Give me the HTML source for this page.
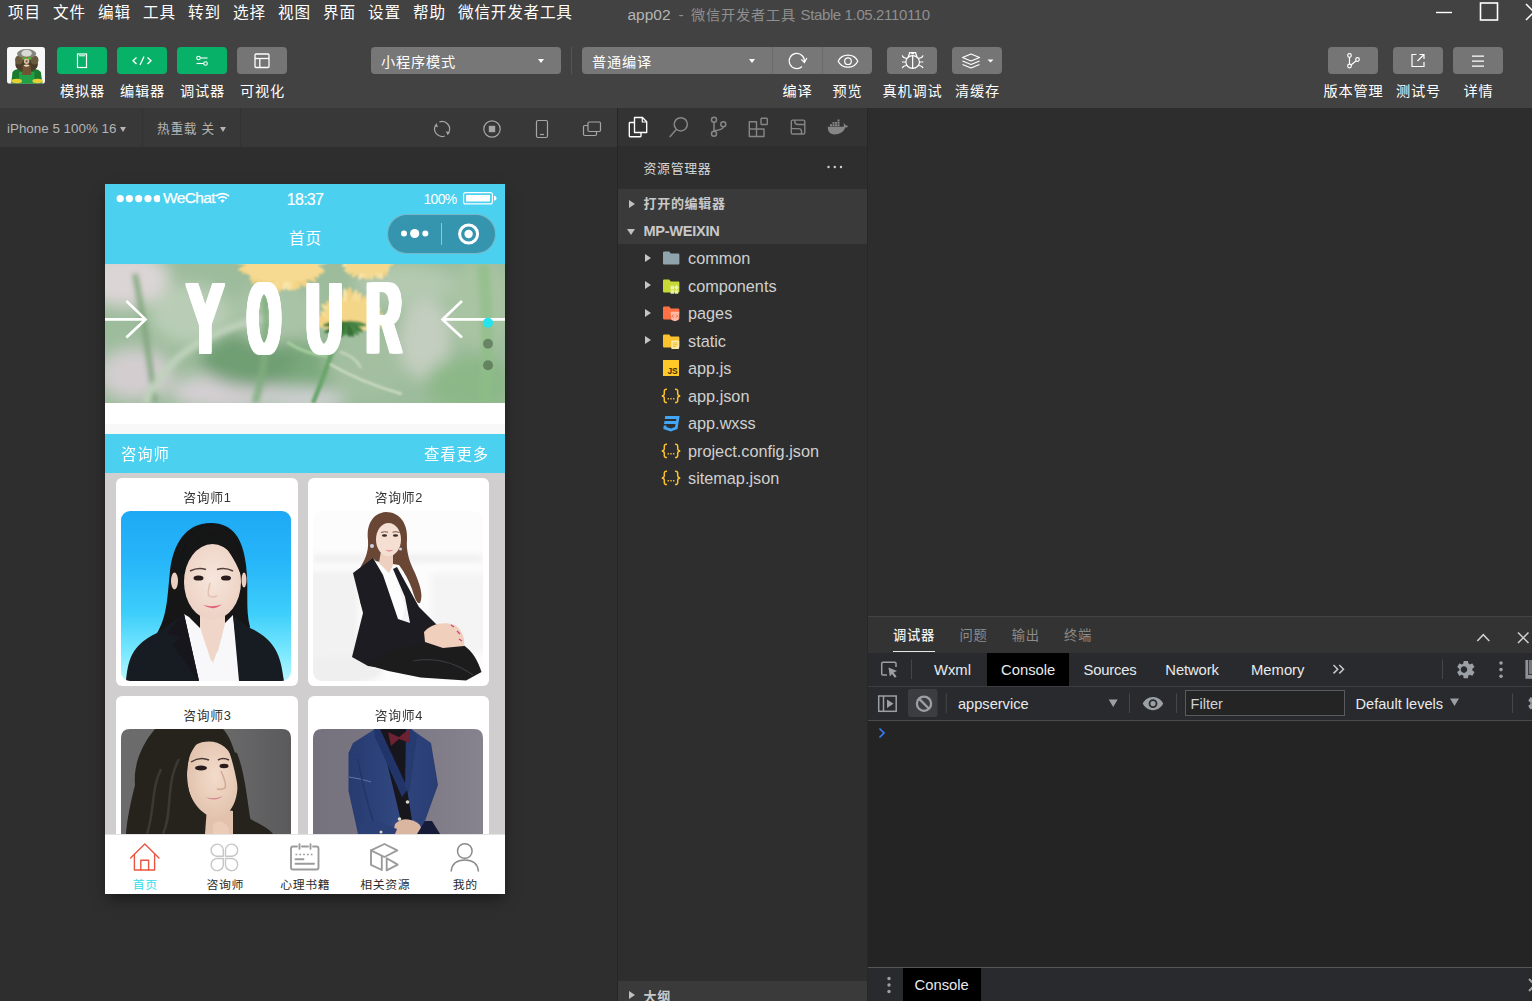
<!DOCTYPE html>
<html lang="zh-CN">
<head>
<meta charset="utf-8">
<title>app02 - 微信开发者工具 Stable 1.05.2110110</title>
<style>
*{box-sizing:border-box;margin:0;padding:0}
html,body{width:1532px;height:1001px;overflow:hidden;background:#424242}
body{font-family:"Liberation Sans","Noto Sans CJK SC",sans-serif;color:#fff;position:relative}
.abs{position:absolute}
svg{display:block;overflow:visible}
/* ---------- menu bar ---------- */
#menubar{left:0;top:0;width:1532px;height:28px;background:#424242}
.mi{position:absolute;top:0.900px;font-size:15.600px;letter-spacing:0.800px;line-height:24px;color:#fff;white-space:nowrap}
#title{position:absolute;left:627.500px;top:2.500px;font-size:15.500px;line-height:24px;color:#8f8f8f;white-space:nowrap}
#title b{font-weight:normal;color:#b5b5b5}
/* ---------- toolbar ---------- */
#toolbar{left:0;top:28px;width:1532px;height:80px;background:#424242}
.tbtn{position:absolute;top:47px;height:27px;width:50px;border-radius:4px;background:#757575}
.tbtn.g{background:#07b268}
.tlab{position:absolute;top:80.500px;height:20px;line-height:20px;font-size:14.200px;letter-spacing:0.800px;padding-left:0.800px;color:#fff;text-align:center;white-space:nowrap}
.dd{position:absolute;top:47px;height:27px;background:#777;border-radius:4px;font-size:14.200px;letter-spacing:0.800px;line-height:30.600px;color:#fff;padding-left:10px;overflow:hidden}
.caret{position:absolute;width:0;height:0;border-left:3.5px solid transparent;border-right:3.5px solid transparent;border-top:4.5px solid #fff}
/* ---------- simulator ---------- */
#simbar{left:0;top:108px;width:617px;height:39px;background:#383838}
#simarea{left:0;top:147px;width:617px;height:854px;background:#2e2e2e}
#vdiv{left:617px;top:108px;width:1px;height:893px;background:#262626}
.simtxt{position:absolute;top:119px;font-size:13.400px;line-height:20px;color:#b4b4b4;white-space:nowrap}

/* ---------- phone ---------- */
#phone{left:105px;top:184px;width:400px;height:710px;background:#d0cece;overflow:hidden;box-shadow:0 7px 14px -3px rgba(0,0,0,.5);font-family:"Liberation Sans","Noto Sans CJK SC",sans-serif}
#phone .nav{position:absolute;left:0;top:0;width:400px;height:80px;background:#4cd0f0}
#phone .st{position:absolute;top:5px;font-size:14px;line-height:18px;color:#fff;white-space:nowrap}
#phone .ttl{position:absolute;left:0;top:43.900px;width:400px;text-align:center;font-size:15.600px;letter-spacing:1px;padding-left:1px;line-height:22px;color:#fff}
#phone .cap{position:absolute;left:282.200px;top:30px;width:109px;height:39.500px;border-radius:20px;background:#3695ae;border:1px solid rgba(255,255,255,.32)}
#phone .hd{position:absolute;left:0;top:250px;width:400px;height:39px;background:#4cd0f0;color:#fff;font-size:15.400px;letter-spacing:0.850px;line-height:42px}
.card{position:absolute;width:182px;height:208px;background:#fff;border-radius:6px}
.card .ct{position:absolute;left:0;top:9.500px;width:100%;text-align:center;font-size:12.800px;letter-spacing:0.700px;padding-left:0.700px;line-height:20px;color:#333}
.card svg{position:absolute;left:5px;top:33px}
#tabbar{position:absolute;left:0;top:650px;width:400px;height:60px;background:#fff}
#tabbar .tl{position:absolute;top:42.400px;width:80px;text-align:center;font-size:11.900px;letter-spacing:0.600px;padding-left:0.600px;line-height:18px;color:#2c2c2c}
/* ---------- explorer ---------- */
#actbar{left:618px;top:108px;width:250px;height:38px;background:#333}
#explorer{left:618px;top:146px;width:250px;height:855px;background:#2e2e2e}
#editor{left:868px;top:108px;width:664px;height:509px;background:#2d2d2d}
.sec{position:absolute;left:618px;width:249px;height:27.5px;background:#3a3a3a;font-size:13px;letter-spacing:0.700px;font-weight:bold;color:#c8c8c8;line-height:27px}
.row{position:absolute;left:619px;width:248px;height:27.5px;font-size:16.250px;line-height:27px;color:#d0d0d0;white-space:nowrap}
.row span{position:absolute;left:69px;top:1px}
.tri{position:absolute;width:0;height:0;border-top:4.5px solid transparent;border-bottom:4.5px solid transparent;border-left:6px solid #c0c0c0}
.trid{position:absolute;width:0;height:0;border-left:4.5px solid transparent;border-right:4.5px solid transparent;border-top:6px solid #c0c0c0}
/* ---------- debugger ---------- */
#panel{left:868px;top:616px;width:664px;height:385px;background:#242424;border-top:1px solid #444}

.ptab{position:absolute;top:626px;font-size:13.300px;letter-spacing:0.700px;line-height:20px;color:#8b8b8b;white-space:nowrap}
.dtab{position:absolute;top:654px;height:33px;font-size:14.800px;line-height:33px;color:#e8eaed;white-space:nowrap}
.ctx{position:absolute;top:688px;height:33px;font-size:14.600px;line-height:33px;color:#e8eaed;white-space:nowrap}
</style>
</head>
<body>
<div id="menubar" class="abs"></div>
<div id="toolbar" class="abs"></div>
<div id="simbar" class="abs"></div>
<div id="simarea" class="abs"></div>
<div id="vdiv" class="abs"></div>
<div id="actbar" class="abs"></div>
<div id="explorer" class="abs"></div>
<div id="editor" class="abs"></div>
<div id="panel" class="abs"></div>
<div class="mi" style="left:8px">项目</div>
<div class="mi" style="left:53px">文件</div>
<div class="mi" style="left:98px">编辑</div>
<div class="mi" style="left:143px">工具</div>
<div class="mi" style="left:188px">转到</div>
<div class="mi" style="left:233px">选择</div>
<div class="mi" style="left:278px">视图</div>
<div class="mi" style="left:323px">界面</div>
<div class="mi" style="left:368px">设置</div>
<div class="mi" style="left:413px">帮助</div>
<div class="mi" style="left:458px">微信开发者工具</div>
<div id="title"><b style="position:absolute;left:0;top:0">app02</b><span style="position:absolute;left:51px;top:0">-</span><span style="position:absolute;left:63.500px;top:0;font-size:14.200px;letter-spacing:0.800px">微信开发者工具</span><span style="position:absolute;left:173px;top:0;font-size:15px;letter-spacing:-0.370px">Stable 1.05.2110110</span></div>
<svg class="abs" style="left:1430px;top:0" width="102" height="28" viewBox="0 0 102 28">
<line x1="6" y1="12.5" x2="22" y2="12.5" stroke="#fff" stroke-width="1.4"/>
<rect x="50.5" y="3" width="17" height="17" fill="none" stroke="#fff" stroke-width="1.6"/>
<path d="M96 4 L112 20 M112 4 L96 20" stroke="#fff" stroke-width="1.5" fill="none"/>
</svg>
<!--MENU-->

<!-- avatar -->
<svg class="abs" style="left:7px;top:46.600px" width="38" height="36.700" viewBox="0 0 38 36.700">
<defs><clipPath id="avc"><rect x="0" y="0" width="38" height="36.700" rx="2.800"/></clipPath><filter id="avb" x="-10%" y="-10%" width="120%" height="120%"><feGaussianBlur stdDeviation="0.550"/></filter></defs>
<g clip-path="url(#avc)"><rect x="0" y="0" width="38" height="36.700" fill="#f7f7f7"/>
<g filter="url(#avb)">
<path d="M4.200 36.700 L5.500 25 C8 22 13 21.300 19.600 21.300 C26 21.300 31 22 33.800 25 L35.500 36.700 Z" fill="#1b7a2e"/>
<path d="M12 25 H27.500 V36.700 H12 Z" fill="#21a046"/>
<ellipse cx="19.600" cy="17" rx="11.300" ry="8.300" fill="#4b3b29"/>
<ellipse cx="12" cy="13" rx="4" ry="4.500" fill="#6a5a3c"/><ellipse cx="27.500" cy="13" rx="4" ry="4.500" fill="#6a5a3c"/>
<path d="M16 18 H23.500 L24.500 28 H15 Z" fill="#6e5236"/>
<ellipse cx="19.600" cy="6.800" rx="9.600" ry="4.700" fill="#85857d"/>
<ellipse cx="19.600" cy="6.300" rx="5.200" ry="3.600" fill="#d9d9d5"/>
<rect x="14.500" y="9.700" width="10.400" height="3.300" rx="1.500" fill="#8a6a36"/>
<rect x="15.600" y="10.300" width="3" height="2" fill="#43c043"/><rect x="21" y="10.300" width="3" height="2" fill="#43c043"/>
<circle cx="19.600" cy="14.300" r="2.700" fill="#d8c4a2"/><circle cx="19.600" cy="14.300" r="1.100" fill="#6e5a40"/>
<ellipse cx="19.600" cy="18.600" rx="2.800" ry="1.100" fill="#eddcb9"/>
<ellipse cx="9.800" cy="34" rx="5.200" ry="2.200" fill="#e6d033"/><ellipse cx="30.600" cy="34" rx="5.200" ry="2.200" fill="#e6d033"/>
</g></g></svg>
<!-- left buttons -->
<div class="tbtn g" style="left:57px"><svg width="50" height="27" viewBox="0 0 50 27"><rect x="20.500" y="7" width="9" height="13.500" fill="none" stroke="#fff" stroke-width="1.200"/><line x1="22" y1="8.800" x2="28" y2="8.800" stroke="#fff" stroke-width="1"/></svg></div>
<div class="tbtn g" style="left:117px"><svg width="50" height="27" viewBox="0 0 50 27"><path d="M19.500 10.500 L16 13.700 L19.500 17 M30.500 10.500 L34 13.700 L30.500 17 M27 9.500 L23 18" fill="none" stroke="#fff" stroke-width="1.300"/></svg></div>
<div class="tbtn g" style="left:177px"><svg width="50" height="27" viewBox="0 0 50 27"><circle cx="21.500" cy="11" r="1.800" fill="none" stroke="#fff" stroke-width="1.100"/><line x1="23.500" y1="11" x2="30.500" y2="11" stroke="#fff" stroke-width="1.100"/><circle cx="28.500" cy="16.500" r="1.800" fill="none" stroke="#fff" stroke-width="1.100"/><line x1="19.500" y1="16.500" x2="26.500" y2="16.500" stroke="#fff" stroke-width="1.100"/></svg></div>
<div class="tbtn" style="left:237px"><svg width="50" height="27" viewBox="0 0 50 27"><rect x="18" y="7" width="14" height="13.500" rx="1" fill="none" stroke="#fff" stroke-width="1.300"/><line x1="18" y1="11.500" x2="32" y2="11.500" stroke="#fff" stroke-width="1.300"/><line x1="22.800" y1="11.500" x2="22.800" y2="20.500" stroke="#fff" stroke-width="1.300"/></svg></div>
<div class="tlab" style="left:52px;width:60px">模拟器</div>
<div class="tlab" style="left:112px;width:60px">编辑器</div>
<div class="tlab" style="left:172px;width:60px">调试器</div>
<div class="tlab" style="left:232px;width:60px">可视化</div>
<!-- center -->
<div class="dd" style="left:371px;width:190px">小程序模式<i class="caret" style="left:167px;top:11.500px"></i></div>
<div class="abs" style="left:571px;top:47px;width:1px;height:27px;background:#555"></div>
<div class="dd" style="left:582px;width:290px">普通编译<i class="caret" style="left:167px;top:11.500px"></i></div>
<div class="abs" style="left:772px;top:47px;width:1px;height:27px;background:#6a6a6a"></div>
<div class="abs" style="left:822px;top:47px;width:1px;height:27px;background:#6a6a6a"></div>
<svg class="abs" style="left:773px;top:47px" width="49" height="27" viewBox="0 0 49 27"><path d="M28.980 19.550 A7.600 7.600 0 1 1 31.300 15.300" fill="none" stroke="#fff" stroke-width="1.200"/><path d="M28.300 12.300 L31.400 15.500 L33.900 11" fill="none" stroke="#fff" stroke-width="1.200"/></svg>
<svg class="abs" style="left:823px;top:47px" width="49" height="27" viewBox="0 0 49 27"><path d="M15.200 14.200 C19 6.200 31 6.200 34.800 14.200 C31 22.200 19 22.200 15.200 14.200 Z" fill="none" stroke="#fff" stroke-width="1.200"/><circle cx="25" cy="14.200" r="3.300" fill="none" stroke="#fff" stroke-width="1.200"/></svg>
<div class="tbtn" style="left:887px"><svg width="50" height="27" viewBox="0 0 50 27" fill="none" stroke="#fff" stroke-width="1.200"><ellipse cx="25.650" cy="15" rx="6.800" ry="6.400"/><path d="M21.300 10 L22.700 5.700 H28.600 L30 10 M24.300 6.600 H27 M25.650 8.600 V21.400 M18.800 15 H15 M32.500 15 H36.300 M19.800 11.300 Q16 11 15.300 8.300 M31.500 11.300 Q35.300 11 36 8.300 M19.800 18.500 Q16.500 18.500 15.300 21 M31.500 18.500 Q34.800 18.500 36 21"/></svg></div>
<div class="tbtn" style="left:952px"><svg width="50" height="27" viewBox="0 0 50 27"><path d="M19 7 L27.500 10.500 L19 14 L10.500 10.500 Z M10.500 14 L19 17.500 L27.500 14 M10.500 17.500 L19 21 L27.500 17.500" fill="none" stroke="#fff" stroke-width="1.200" stroke-linejoin="round"/><path d="M35.500 12.500 h6 l-3 3z" fill="#fff"/></svg></div>
<div class="tlab" style="left:767px;width:60px">编译</div>
<div class="tlab" style="left:817px;width:60px">预览</div>
<div class="tlab" style="left:872px;width:80px">真机调试</div>
<div class="tlab" style="left:942px;width:70px">清缓存</div>
<!-- right -->
<div class="tbtn" style="left:1328px"><svg width="50" height="27" viewBox="0 0 50 27"><circle cx="21.500" cy="8.500" r="1.800" fill="none" stroke="#fff" stroke-width="1.200"/><circle cx="21.500" cy="19" r="1.800" fill="none" stroke="#fff" stroke-width="1.200"/><circle cx="29.500" cy="12.500" r="1.800" fill="none" stroke="#fff" stroke-width="1.200"/><path d="M21.500 10.300 V17.200 M23 18 L28.200 13.700" fill="none" stroke="#fff" stroke-width="1.200"/></svg></div>
<div class="tbtn" style="left:1393px"><svg width="50" height="27" viewBox="0 0 50 27"><path d="M23.500 7.500 H19 V19.500 H31 V15" fill="none" stroke="#fff" stroke-width="1.200"/><path d="M24.500 14 L31 7.500 M26.500 7.500 H31 V12" fill="none" stroke="#fff" stroke-width="1.200"/></svg></div>
<div class="tbtn" style="left:1453px"><svg width="50" height="27" viewBox="0 0 50 27"><path d="M19 9.200 H31 M19 14.200 H31 M19 19.200 H31" fill="none" stroke="#fff" stroke-width="1.200"/></svg></div>
<div class="tlab" style="left:1313px;width:80px">版本管理</div>
<div class="tlab" style="left:1383px;width:70px">测试号</div>
<div class="tlab" style="left:1443px;width:70px">详情</div>
<!--TOOLBAR-->

<div class="simtxt" style="left:7px">iPhone 5 100% 16</div>
<i class="caret" style="left:120px;top:127px;border-top-color:#b4b4b4;border-left-width:3.5px;border-right-width:3.5px;border-top-width:5px"></i>
<div class="abs" style="left:142px;top:108px;width:1px;height:39px;background:#333"></div>
<div class="simtxt" style="left:157px;font-size:12.700px;letter-spacing:0.700px">热重载 关</div>
<i class="caret" style="left:219.500px;top:127px;border-top-color:#b4b4b4;border-left-width:3.5px;border-right-width:3.5px;border-top-width:5px"></i>
<div class="abs" style="left:240px;top:108px;width:1px;height:39px;background:#333"></div>
<svg class="abs" style="left:430px;top:116px" width="180" height="26" viewBox="430 116 180 26" fill="none" stroke="#a6a6a6" stroke-width="1.200">
<path d="M439.300 122.050 A7.500 7.500 0 0 1 448.700 132.500 M444.800 136 A7.500 7.500 0 0 1 435.500 125.500"/>
<path d="M445.800 131.300 L449.900 132.300 L447.600 135.300 Z M434.500 126.300 L438 127.300 L436.500 123 Z" fill="#a6a6a6" stroke="none"/>
<circle cx="492" cy="129" r="8.200"/><rect x="488.800" y="125.800" width="6.400" height="6.400" fill="#a6a6a6" stroke="none"/>
<rect x="536.500" y="120.500" width="11" height="17" rx="1.500"/><line x1="540" y1="134.500" x2="544" y2="134.500"/>
<rect x="588" y="122" width="12.500" height="9.500" rx="1.200"/><path d="M588 125.500 H584.700 Q583.500 125.500 583.500 126.700 V134.300 Q583.500 135.500 584.700 135.500 H595.300 Q596.500 135.500 596.500 134.300 V131.500"/>
</svg>
<!--SIM-->

<div id="phone" class="abs">
<div class="nav">
<svg class="abs" style="left:0;top:0" width="400" height="30" viewBox="0 0 400 30" fill="#fff">
<circle cx="15.200" cy="14.600" r="3.600"/><circle cx="24.400" cy="14.600" r="3.600"/><circle cx="33.700" cy="14.600" r="3.600"/><circle cx="43" cy="14.600" r="3.600"/><circle cx="52.300" cy="14.600" r="3.600"/>
<rect x="55.100" y="8" width="3" height="13" fill="#4cd0f0"/>
<path d="M117.500 19 L115.300 16.600 A3.200 3.200 0 0 1 119.700 16.600 Z"/>
<path d="M113.300 14.600 A6 6 0 0 1 121.700 14.600 M111 12.200 A9.300 9.300 0 0 1 124 12.200" fill="none" stroke="#fff" stroke-width="1.700"/>
<rect x="358.600" y="8.600" width="28.800" height="11.300" rx="2" fill="none" stroke="#fff" stroke-width="1.100"/>
<rect x="361" y="11" width="24" height="6.500" rx="0.500"/>
<path d="M389 11.800 Q391.500 12.200 391.500 14.300 Q391.500 16.400 389 16.800 Z"/>
</svg>
<div class="st" style="left:58px;font-size:15.500px;letter-spacing:-0.650px;-webkit-text-stroke:0.250px #fff">WeChat</div>
<div class="st" style="left:0;top:6.500px;width:400px;text-align:center;font-size:16px;letter-spacing:-0.750px;-webkit-text-stroke:0.200px #fff">18:37</div>
<div class="st" style="left:318.500px;font-size:14px;letter-spacing:-0.700px;top:6px">100%</div>
<div class="ttl">首页</div>
<div class="cap"><svg width="106" height="37" viewBox="0 0 106 37" fill="#fff"><circle cx="16" cy="18.500" r="3"/><circle cx="26.700" cy="18.500" r="4.600"/><circle cx="37.300" cy="18.500" r="3"/><rect x="53" y="8" width="1" height="22" fill="rgba(255,255,255,.45)"/><circle cx="80.600" cy="19" r="9" fill="none" stroke="#fff" stroke-width="3"/><circle cx="80.600" cy="19" r="4.200"/></svg></div>
</div>

<svg class="abs" style="left:0;top:80px" width="400" height="139" viewBox="0 0 400 139">
<defs>
<filter id="bl8" x="-20%" y="-20%" width="140%" height="140%"><feGaussianBlur stdDeviation="8"/></filter>
<filter id="bl3" x="-20%" y="-20%" width="140%" height="140%"><feGaussianBlur stdDeviation="2.500"/></filter>
<filter id="bl1" x="-20%" y="-20%" width="140%" height="140%"><feGaussianBlur stdDeviation="0.800"/></filter>
<clipPath id="bc"><rect x="0" y="0" width="400" height="139"/></clipPath>
</defs>
<g clip-path="url(#bc)">
<rect x="0" y="0" width="400" height="139" fill="#9dbc9c"/>
<g filter="url(#bl8)">
<ellipse cx="20" cy="15" rx="45" ry="28" fill="#dcd5d6"/>
<ellipse cx="85" cy="50" rx="40" ry="30" fill="#b9cdb6"/>
<ellipse cx="30" cy="110" rx="38" ry="26" fill="#d3cdd0"/>
<ellipse cx="120" cy="128" rx="55" ry="18" fill="#d4cfd3"/>
<ellipse cx="150" cy="95" rx="55" ry="28" fill="#6f9f73"/>
<ellipse cx="170" cy="50" rx="45" ry="30" fill="#a9c3a6"/>
<ellipse cx="215" cy="110" rx="30" ry="30" fill="#7aa97b"/>
<ellipse cx="260" cy="100" rx="40" ry="35" fill="#a3bfa0"/>
<ellipse cx="320" cy="75" rx="26" ry="42" fill="#c4cec0"/>
<ellipse cx="300" cy="20" rx="50" ry="20" fill="#b4c9b0"/>
<ellipse cx="375" cy="40" rx="30" ry="45" fill="#a9c4a3"/>
<ellipse cx="365" cy="120" rx="45" ry="28" fill="#8cb888"/>
<ellipse cx="200" cy="135" rx="40" ry="12" fill="#cfd0d2"/>
</g>
<g filter="url(#bl3)">
<path d="M30 10 Q40 60 50 139" stroke="#7fa47c" stroke-width="5" fill="none"/>
<path d="M40 139 Q70 70 170 52" stroke="#bfd2bb" stroke-width="7" fill="none"/>
<path d="M378 0 Q385 70 380 139" stroke="#8ebd86" stroke-width="12" fill="none" opacity=".7"/>
<path d="M160 30 Q165 90 150 139" stroke="#7fae7e" stroke-width="6" fill="none"/>
</g>
<g filter="url(#bl1)">
<path d="M232 72 Q222 105 208 139" stroke="#6aa56c" stroke-width="4.500" fill="none"/>
<path d="M225 100 Q255 118 297 130" stroke="#cfdcc6" stroke-width="2.500" fill="none"/>
<path d="M222 92 Q200 90 182 78" stroke="#a5cf9f" stroke-width="3" fill="none"/>
<path d="M235 88 Q250 92 256 104" stroke="#c5d6bd" stroke-width="2.500" fill="none"/>
<g><ellipse cx="228.6" cy="62.4" rx="16.5" ry="3.6" fill="#f5d78b" transform="rotate(-174.3 228.6 62.4)"/><ellipse cx="228.1" cy="59.8" rx="17.4" ry="3.6" fill="#f3d283" transform="rotate(-165.9 228.1 59.8)"/><ellipse cx="229.1" cy="57.9" rx="17.1" ry="3.6" fill="#f3d283" transform="rotate(-159.1 229.1 57.9)"/><ellipse cx="230.1" cy="55.8" rx="17.0" ry="3.6" fill="#f7dc94" transform="rotate(-151.2 230.1 55.8)"/><ellipse cx="230.7" cy="52.1" rx="18.6" ry="3.6" fill="#f7dc94" transform="rotate(-140.2 230.7 52.1)"/><ellipse cx="233.2" cy="50.6" rx="17.8" ry="3.6" fill="#f5d78b" transform="rotate(-131.4 233.2 50.6)"/><ellipse cx="234.9" cy="48.3" rx="18.7" ry="3.6" fill="#f3d283" transform="rotate(-122.7 234.9 48.3)"/><ellipse cx="236.9" cy="46.2" rx="19.5" ry="3.6" fill="#f7dc94" transform="rotate(-114.5 236.9 46.2)"/><ellipse cx="238.9" cy="46.7" rx="18.4" ry="3.6" fill="#f3d283" transform="rotate(-109.4 238.9 46.7)"/><ellipse cx="242.3" cy="44.1" rx="20.1" ry="3.6" fill="#f9e3a6" transform="rotate(-97.8 242.3 44.1)"/><ellipse cx="244.9" cy="43.4" rx="20.6" ry="3.6" fill="#f3d283" transform="rotate(-90.4 244.9 43.4)"/><ellipse cx="248.1" cy="44.8" rx="19.5" ry="3.6" fill="#f7dc94" transform="rotate(-80.8 248.1 44.8)"/><ellipse cx="250.3" cy="46.2" rx="18.6" ry="3.6" fill="#f7dc94" transform="rotate(-73.5 250.3 46.2)"/><ellipse cx="253.2" cy="47.6" rx="18.3" ry="3.6" fill="#f3d283" transform="rotate(-63.6 253.2 47.6)"/><ellipse cx="254.6" cy="49.5" rx="17.4" ry="3.6" fill="#f7dc94" transform="rotate(-56.3 254.6 49.5)"/><ellipse cx="257.5" cy="49.9" rx="18.8" ry="3.6" fill="#f5d78b" transform="rotate(-48.6 257.5 49.9)"/><ellipse cx="257.4" cy="52.8" rx="16.7" ry="3.6" fill="#f7dc94" transform="rotate(-42.2 257.4 52.8)"/><ellipse cx="260.3" cy="54.1" rx="18.3" ry="3.6" fill="#f7dc94" transform="rotate(-32.9 260.3 54.1)"/><ellipse cx="261.6" cy="57.0" rx="18.0" ry="3.6" fill="#f5d78b" transform="rotate(-23.0 261.6 57.0)"/><ellipse cx="261.3" cy="59.7" rx="16.8" ry="3.6" fill="#f3d283" transform="rotate(-14.9 261.3 59.7)"/><ellipse cx="260.8" cy="62.8" rx="15.9" ry="3.6" fill="#f7dc94" transform="rotate(-4.3 260.8 62.8)"/></g>
<ellipse cx="245" cy="50" rx="24" ry="13" fill="#f4d689"/>
<g><ellipse cx="251.0" cy="59.7" rx="11.2" ry="2.4" fill="#4a8a47" transform="rotate(8.9 251.0 59.7)"/><ellipse cx="249.2" cy="62.8" rx="10.4" ry="2.4" fill="#3f7d3d" transform="rotate(27.5 249.2 62.8)"/><ellipse cx="246.8" cy="64.4" rx="9.3" ry="2.4" fill="#4a8a47" transform="rotate(43.2 246.8 64.4)"/><ellipse cx="244.3" cy="65.4" rx="8.6" ry="2.4" fill="#356f36" transform="rotate(59.8 244.3 65.4)"/><ellipse cx="242.4" cy="65.5" rx="7.9" ry="2.4" fill="#356f36" transform="rotate(72.1 242.4 65.5)"/><ellipse cx="239.8" cy="64.9" rx="6.9" ry="2.4" fill="#4a8a47" transform="rotate(91.6 239.8 64.9)"/><ellipse cx="238.1" cy="65.6" rx="7.8" ry="2.4" fill="#3f7d3d" transform="rotate(103.7 238.1 65.6)"/><ellipse cx="235.5" cy="66.1" rx="9.3" ry="2.4" fill="#356f36" transform="rotate(119.0 235.5 66.1)"/><ellipse cx="232.4" cy="65.1" rx="10.4" ry="2.4" fill="#3f7d3d" transform="rotate(136.8 232.4 65.1)"/><ellipse cx="229.8" cy="63.4" rx="11.5" ry="2.4" fill="#356f36" transform="rotate(152.1 229.8 63.4)"/><ellipse cx="228.8" cy="59.8" rx="11.3" ry="2.4" fill="#3f7d3d" transform="rotate(170.9 228.8 59.8)"/></g>
<g><ellipse cx="200.0" cy="-3.6" rx="22.1" ry="3.8" fill="#f9e3a6" transform="rotate(6.3 200.0 -3.6)"/><ellipse cx="198.8" cy="0.5" rx="21.8" ry="3.8" fill="#f7dc94" transform="rotate(17.4 198.8 0.5)"/><ellipse cx="198.4" cy="1.6" rx="21.7" ry="3.8" fill="#f3d283" transform="rotate(20.4 198.4 1.6)"/><ellipse cx="196.2" cy="3.5" rx="20.5" ry="3.8" fill="#f5d78b" transform="rotate(27.5 196.2 3.5)"/><ellipse cx="194.6" cy="5.9" rx="20.5" ry="3.8" fill="#f3d283" transform="rotate(35.6 194.6 5.9)"/><ellipse cx="190.8" cy="7.9" rx="18.9" ry="3.8" fill="#f3d283" transform="rotate(47.5 190.8 7.9)"/><ellipse cx="189.4" cy="8.4" rx="18.4" ry="3.8" fill="#f3d283" transform="rotate(51.6 189.4 8.4)"/><ellipse cx="186.4" cy="9.5" rx="17.6" ry="3.8" fill="#f3d283" transform="rotate(61.5 186.4 9.5)"/><ellipse cx="184.3" cy="10.3" rx="17.5" ry="3.8" fill="#f5d78b" transform="rotate(68.8 184.3 10.3)"/><ellipse cx="182.2" cy="10.4" rx="16.9" ry="3.8" fill="#f7dc94" transform="rotate(75.7 182.2 10.4)"/><ellipse cx="180.8" cy="10.3" rx="16.5" ry="3.8" fill="#f9e3a6" transform="rotate(80.2 180.8 10.3)"/><ellipse cx="178.4" cy="10.2" rx="16.2" ry="3.8" fill="#f9e3a6" transform="rotate(88.4 178.4 10.2)"/><ellipse cx="175.9" cy="11.2" rx="17.3" ry="3.8" fill="#f5d78b" transform="rotate(97.0 175.9 11.2)"/><ellipse cx="174.1" cy="10.0" rx="16.4" ry="3.8" fill="#f7dc94" transform="rotate(103.7 174.1 10.0)"/><ellipse cx="171.9" cy="10.6" rx="17.7" ry="3.8" fill="#f7dc94" transform="rotate(110.1 171.9 10.6)"/><ellipse cx="168.8" cy="11.0" rx="19.3" ry="3.8" fill="#f3d283" transform="rotate(118.5 168.8 11.0)"/><ellipse cx="166.7" cy="8.0" rx="18.0" ry="3.8" fill="#f5d78b" transform="rotate(128.8 166.7 8.0)"/><ellipse cx="165.0" cy="7.3" rx="18.6" ry="3.8" fill="#f3d283" transform="rotate(134.4 165.0 7.3)"/><ellipse cx="162.2" cy="6.8" rx="20.3" ry="3.8" fill="#f3d283" transform="rotate(140.9 162.2 6.8)"/><ellipse cx="161.2" cy="4.8" rx="20.0" ry="3.8" fill="#f5d78b" transform="rotate(147.2 161.2 4.8)"/><ellipse cx="157.4" cy="1.5" rx="21.9" ry="3.8" fill="#f3d283" transform="rotate(160.0 157.4 1.5)"/><ellipse cx="155.5" cy="-0.0" rx="23.3" ry="3.8" fill="#f5d78b" transform="rotate(165.1 155.5 -0.0)"/><ellipse cx="154.8" cy="-3.7" rx="23.3" ry="3.8" fill="#f7dc94" transform="rotate(174.5 154.8 -3.7)"/></g>
<ellipse cx="178" cy="6" rx="38" ry="12" fill="#f6da92"/>
<g><ellipse cx="277.5" cy="-6.2" rx="14.6" ry="3.4" fill="#f5d78b" transform="rotate(7.1 277.5 -6.2)"/><ellipse cx="275.9" cy="-3.6" rx="13.7" ry="3.4" fill="#f3d283" transform="rotate(18.8 275.9 -3.6)"/><ellipse cx="273.5" cy="-0.4" rx="12.9" ry="3.4" fill="#f9e3a6" transform="rotate(35.9 273.5 -0.4)"/><ellipse cx="272.7" cy="2.0" rx="13.9" ry="3.4" fill="#f3d283" transform="rotate(45.7 272.7 2.0)"/><ellipse cx="270.3" cy="3.5" rx="13.6" ry="3.4" fill="#f9e3a6" transform="rotate(57.5 270.3 3.5)"/><ellipse cx="268.4" cy="3.3" rx="12.5" ry="3.4" fill="#f7dc94" transform="rotate(64.7 268.4 3.3)"/><ellipse cx="264.9" cy="4.0" rx="12.1" ry="3.4" fill="#f7dc94" transform="rotate(80.8 264.9 4.0)"/><ellipse cx="262.5" cy="4.0" rx="12.0" ry="3.4" fill="#f5d78b" transform="rotate(92.2 262.5 4.0)"/><ellipse cx="260.9" cy="3.3" rx="11.5" ry="3.4" fill="#f7dc94" transform="rotate(100.7 260.9 3.3)"/><ellipse cx="258.6" cy="4.0" rx="12.8" ry="3.4" fill="#f9e3a6" transform="rotate(110.3 258.6 4.0)"/><ellipse cx="255.1" cy="2.7" rx="13.3" ry="3.4" fill="#f5d78b" transform="rotate(126.6 255.1 2.7)"/><ellipse cx="252.8" cy="1.0" rx="13.6" ry="3.4" fill="#f5d78b" transform="rotate(138.3 252.8 1.0)"/><ellipse cx="251.1" cy="-0.2" rx="14.2" ry="3.4" fill="#f7dc94" transform="rotate(146.8 251.1 -0.2)"/><ellipse cx="249.9" cy="-2.9" rx="14.0" ry="3.4" fill="#f9e3a6" transform="rotate(158.7 249.9 -2.9)"/><ellipse cx="248.9" cy="-5.7" rx="14.3" ry="3.4" fill="#f3d283" transform="rotate(170.6 248.9 -5.7)"/></g>
<ellipse cx="263" cy="2" rx="22" ry="8" fill="#f4d88e"/>
</g>
<path d="M0 55.400 H40 M21.400 37 L40.500 55.400 L21.400 73.500" fill="none" stroke="#fff" stroke-width="2.700"/>
<path d="M400 55.400 H338 M357 37 L337.500 55.400 L357 73.500" fill="none" stroke="#fff" stroke-width="2.700"/>
<circle cx="383" cy="58.700" r="5" fill="#25e4ef"/>
<circle cx="383" cy="79.700" r="5" fill="#000" fill-opacity=".3"/>
<circle cx="383" cy="101.300" r="5" fill="#000" fill-opacity=".3"/>
</g>
</svg>

<div id="your" class="abs" style="left:0;top:80px;width:400px;height:139px;overflow:hidden;color:#fff;font-size:100.9px;line-height:1">
<span style="position:absolute;left:82.78px;top:4.49px;transform-origin:0 0;transform:scaleX(0.5124);text-shadow:-7.26px -1.10px 0 #fff,-7.26px 0.00px 0 #fff,-7.26px 1.10px 0 #fff,-3.63px -1.10px 0 #fff,-3.63px 0.00px 0 #fff,-3.63px 1.10px 0 #fff,0.00px -1.10px 0 #fff,0.00px 1.10px 0 #fff,3.63px -1.10px 0 #fff,3.63px 0.00px 0 #fff,3.63px 1.10px 0 #fff,7.26px -1.10px 0 #fff,7.26px 0.00px 0 #fff,7.26px 1.10px 0 #fff">Y</span>
<span style="position:absolute;left:143.75px;top:4.49px;transform-origin:0 0;transform:scaleX(0.3833);text-shadow:-11.12px -1.10px 0 #fff,-11.12px 0.00px 0 #fff,-11.12px 1.10px 0 #fff,-5.56px -1.10px 0 #fff,-5.56px 0.00px 0 #fff,-5.56px 1.10px 0 #fff,0.00px -1.10px 0 #fff,0.00px 1.10px 0 #fff,5.56px -1.10px 0 #fff,5.56px 0.00px 0 #fff,5.56px 1.10px 0 #fff,11.12px -1.10px 0 #fff,11.12px 0.00px 0 #fff,11.12px 1.10px 0 #fff">O</span>
<span style="position:absolute;left:201.54px;top:4.49px;transform-origin:0 0;transform:scaleX(0.4704);text-shadow:-8.27px -1.10px 0 #fff,-8.27px 0.00px 0 #fff,-8.27px 1.10px 0 #fff,-4.14px -1.10px 0 #fff,-4.14px 0.00px 0 #fff,-4.14px 1.10px 0 #fff,0.00px -1.10px 0 #fff,0.00px 1.10px 0 #fff,4.14px -1.10px 0 #fff,4.14px 0.00px 0 #fff,4.14px 1.10px 0 #fff,8.27px -1.10px 0 #fff,8.27px 0.00px 0 #fff,8.27px 1.10px 0 #fff">U</span>
<span style="position:absolute;left:262.47px;top:4.49px;transform-origin:0 0;transform:scaleX(0.4648);text-shadow:-8.43px -1.10px 0 #fff,-8.43px 0.00px 0 #fff,-8.43px 1.10px 0 #fff,-4.22px -1.10px 0 #fff,-4.22px 0.00px 0 #fff,-4.22px 1.10px 0 #fff,0.00px -1.10px 0 #fff,0.00px 1.10px 0 #fff,4.22px -1.10px 0 #fff,4.22px 0.00px 0 #fff,4.22px 1.10px 0 #fff,8.43px -1.10px 0 #fff,8.43px 0.00px 0 #fff,8.43px 1.10px 0 #fff">R</span>
</div>
<div class="abs" style="left:0;top:219px;width:400px;height:21px;background:#fff"></div>
<div class="abs" style="left:0;top:240px;width:400px;height:10px;background:#f8f8f8"></div>
<div class="hd"><span style="position:absolute;left:16px">咨询师</span><span style="position:absolute;right:16px">查看更多</span></div>
<div class="card" style="left:11px;top:294px"><div class="ct">咨询师1</div><svg width="170" height="170" viewBox="0 0 170 170">
<defs><clipPath id="c1"><rect width="170" height="170" rx="9"/></clipPath>
<linearGradient id="g1" x1="0" y1="0" x2="0" y2="1"><stop offset="0" stop-color="#1fa9f5"/><stop offset=".3" stop-color="#27b6f9"/><stop offset=".6" stop-color="#3dcefb"/><stop offset=".85" stop-color="#7eeaff"/><stop offset="1" stop-color="#b9f7ff"/></linearGradient>
<radialGradient id="f1" cx=".5" cy=".45" r=".6"><stop offset="0" stop-color="#f7e6dc"/><stop offset="1" stop-color="#ecd0c2"/></radialGradient>
<filter id="pb" x="-10%" y="-10%" width="120%" height="120%"><feGaussianBlur stdDeviation="0.700"/></filter></defs>
<g clip-path="url(#c1)"><rect width="170" height="170" fill="url(#g1)"/>
<g filter="url(#pb)">
<path d="M90 12 C64 12 52 34 49 60 C46 90 46 106 35 124 L62 130 L124 124 L129 116 C124 98 128 78 125 54 C122 28 112 12 90 12 Z" fill="#121317"/>
<path d="M79 96 H104 V122 L96 150 L86 150 L79 122 Z" fill="#efd6c8"/>
<ellipse cx="91.500" cy="71" rx="28.500" ry="38" fill="url(#f1)"/>
<path d="M62 64 C64 40 76 30 91 22 C90 24 108 32 120 64 C124 40 114 15 90 14 C66 15 58 42 62 64 Z" fill="#121317"/>
<ellipse cx="53.500" cy="70" rx="3.500" ry="8.500" fill="#ebcfc1"/><ellipse cx="123" cy="69" rx="2.500" ry="7.500" fill="#ebcfc1"/>
<path d="M63 103 L72 170 H120 L112 104 L104 112 L97 140 L90 150 L80 118 L68 106 Z" fill="#f8f8fa"/>
<path d="M79 118 L92 152 L100 128 L104 112 L97 126 L90 140 Z" fill="#efd6c8"/>
<path d="M36 122 L63 103 L78 170 H5 C7 150 10 134 36 122 Z" fill="#191b20"/>
<path d="M129 117 L112 104 L118 170 H163 C160 150 158 130 129 117 Z" fill="#191b20"/>
<path d="M63 103 L46 122 L60 126 L52 134 L78 170 Z" fill="#15161a"/>
<ellipse cx="77.500" cy="67" rx="5" ry="2.600" fill="#2a1f1d"/><ellipse cx="105" cy="67" rx="5" ry="2.600" fill="#2a1f1d"/>
<path d="M69 60 q8 -4 16 -1.500 M96 58.500 q8 -2.500 16 1.500" stroke="#54413b" stroke-width="1.600" fill="none"/>
<path d="M82 94 q9.500 2.500 19 -0.500 q-9 7 -19 0.500z" fill="#e2667a"/>
<path d="M89 72 q-3 11 -1 13 q3 2 8 0" stroke="#e0bfb0" stroke-width="1.500" fill="none"/>
</g></g></svg></div>
<div class="card" style="left:203px;top:294px;width:181px"><div class="ct">咨询师2</div><svg width="170" height="170" viewBox="0 0 170 170">
<defs><clipPath id="c2"><rect width="170" height="170" rx="9"/></clipPath>
<filter id="pb2" x="-10%" y="-10%" width="120%" height="120%"><feGaussianBlur stdDeviation="3"/></filter></defs>
<g clip-path="url(#c2)"><rect width="170" height="170" fill="#fcfcfc"/>
<g filter="url(#pb2)"><rect x="0" y="44" width="170" height="7" fill="#efeeee"/><rect x="-5" y="60" width="50" height="120" fill="#f3f2f2"/><rect x="118" y="62" width="60" height="80" fill="#f5f4f4"/><ellipse cx="30" cy="160" rx="40" ry="14" fill="#f0efef"/></g>
<g filter="url(#pb)">
<path d="M73 1 C59 2 53 15 55 29 C56 42 51 50 47 57 L62 50 L86 54 C92 62 96 70 99 78 C102 88 104 93 107 92 C111 84 106 72 102 62 C96 50 93 40 94 28 C95 12 86 1 73 1 Z" fill="#6a4635"/>
<path d="M50 78 C46 84 46 90 49 96 L53 86 Z" fill="#6b4a3a"/>
<path d="M68 40 H80 V54 L76 62 L66 52 Z" fill="#eed0c0"/>
<ellipse cx="75.500" cy="28.500" rx="12.500" ry="16.500" fill="#f5dfd3"/>
<path d="M62 28 C62 13 70 9 77 8 C83 9 88 15 88.500 28 C92 12 85 2 74 2 C63 3 58 15 62 28Z" fill="#6a4635"/>
<path d="M60 47 L74 62 L86 84 L90 96 L96 110 L86 112 L72 72 Z" fill="#fdfdfd"/>
<path d="M80 56 L90 72 L98 90 L98 110 L88 112 L92 96 Z" fill="#f4f4f6"/>
<path d="M60 47 L40 62 L50 102 L39 146 L55 155 L92 160 L112 134 L150 134 L128 118 L106 96 L84 56 L80 58 L92 86 L97 112 L85 108 L70 64 Z" fill="#1c1c20"/>
<path d="M54.500 154 L75 140 L111 132.500 L151 134.500 C160 141 165 150 168.500 161 L153 169.500 L107.600 166.500 L75.400 160 Z" fill="#1b1b1e"/><path d="M100 150 C120 146 140 150 160 164" stroke="#38383c" stroke-width="1.200" fill="none"/>
<path d="M111 121 C118 113 130 110 142 114 C150 120 152 128 151 135 L130 137 L112 131 Z" fill="#f0cfbd"/>
<ellipse cx="71.500" cy="24.500" rx="2.600" ry="1.300" fill="#3a2a26"/><ellipse cx="82.500" cy="24.500" rx="2.600" ry="1.300" fill="#3a2a26"/><path d="M68 21.500 q3.500 -1.500 7 -0.300 M79.500 21.200 q3.500 -1.200 7 0.300" stroke="#6a4a3c" stroke-width="0.900" fill="none"/>
<path d="M72 38.500 q4 1.800 8.500 0 q-4 3.800 -8.500 0z" fill="#e5657f"/>
<circle cx="59" cy="35" r="2" fill="#c9d2e0"/><circle cx="87.500" cy="38" r="1.600" fill="#c9d2e0"/>
<path d="M138 114 l3 2 M144 120 l3 3 M146 128 l3 2" stroke="#d4408a" stroke-width="1.400"/>
</g></g></svg></div>
<div class="card" style="left:11px;top:512px"><div class="ct">咨询师3</div><svg width="170" height="105" viewBox="0 0 170 105">
<defs><clipPath id="c3"><path d="M0 105 V9 Q0 0 9 0 H161 Q170 0 170 9 V105Z"/></clipPath>
<linearGradient id="g3" x1="0" y1="0" x2="1" y2="0"><stop offset="0" stop-color="#6c6b6c"/><stop offset=".55" stop-color="#6d6c6d"/><stop offset="1" stop-color="#5a595b"/></linearGradient>
<radialGradient id="f3" cx=".55" cy=".45" r=".65"><stop offset="0" stop-color="#f3dccb"/><stop offset="1" stop-color="#dfbfa9"/></radialGradient></defs>
<g clip-path="url(#c3)"><rect width="170" height="105" fill="url(#g3)"/>
<g filter="url(#pb)">
<path d="M34 0 C22 14 12 34 14 56 C10 72 6 90 5 105 H152 C146 96 128 92 123 84 C118 72 122 56 118 40 C114 20 108 6 102 0 Z" fill="#27231f"/>
<path d="M86 78 L112 82 L112 105 H84 Z" fill="#e3c2ad"/>
<path d="M74 16 C90 8 108 14 113 34 C117 48 118 60 114 72 C110 84 100 92 90 88 C76 82 66 66 66 48 C66 34 68 22 74 16 Z" fill="url(#f3)"/>
<path d="M102 0 C86 4 72 14 68 30 C64 46 66 62 74 78 C60 72 52 52 56 30 C58 16 66 4 78 0 Z" fill="#27231f"/>
<path d="M108 22 C114 40 118 60 120 84 L130 94 C126 70 124 44 116 24 Z" fill="#27231f"/>
<path d="M40 40 C30 60 34 80 26 105 M58 30 C44 56 52 84 42 105" stroke="#3d3834" stroke-width="2.500" fill="none"/>
<ellipse cx="80" cy="39" rx="6" ry="2.600" fill="#2a1d1a"/><ellipse cx="103" cy="37" rx="4.500" ry="2.200" fill="#2a1d1a"/>
<path d="M70 33 q9 -6 18 -2 M97 31 q5 -3 11 0" stroke="#4a3934" stroke-width="1.500" fill="none"/>
<path d="M84 68 q9 3 18 -1 q-8 6.500 -18 1z" fill="#d7838e"/>
<path d="M100 42 q6 13 4 17 q-3 2 -8 1" stroke="#d2aa95" stroke-width="1.600" fill="none"/>
<path d="M92 96 C96 90 104 92 108 100 L108 105 H92 Z" fill="#ebccb8"/>
</g></g></svg></div>
<div class="card" style="left:203px;top:512px;width:181px"><div class="ct">咨询师4</div><svg width="170" height="105" viewBox="0 0 170 105">
<defs><clipPath id="c4"><path d="M0 105 V9 Q0 0 9 0 H161 Q170 0 170 9 V105Z"/></clipPath>
<linearGradient id="g4" x1="0" y1="0" x2="1" y2="0"><stop offset="0" stop-color="#75727d"/><stop offset=".5" stop-color="#7b7884"/><stop offset="1" stop-color="#86838e"/></linearGradient>
<linearGradient id="s4" x1="0" y1="0" x2="1" y2="0"><stop offset="0" stop-color="#283b70"/><stop offset=".5" stop-color="#30467f"/><stop offset="1" stop-color="#2a3d73"/></linearGradient></defs>
<g clip-path="url(#c4)"><rect width="170" height="105" fill="url(#g4)"/>
<g filter="url(#pb)">
<path d="M62 0 L40 14 L35.500 24 L35.500 62 L45 105 H127 L118 92 L112 92 L125 56 L118 14 L98 0 Z" fill="url(#s4)"/>
<path d="M66 0 H94 L94 60 L100 98 L90 100 Z" fill="#14151b"/>
<path d="M61 0 L67 0 L95 60 L89 68 L62 8 Z" fill="#22346a"/>
<path d="M98 0 L93 0 L92 58 L96 64 L101 30 L104 6 Z" fill="#263a70"/>
<path d="M75 3 L86 8 L96 0 L97 14 L86 10 L78 17 Z" fill="#6d2033"/>
<path d="M82 95 C88 88 100 89 107 96 L110 105 H80 Z" fill="#dab59f"/>
<path d="M45 105 L46 96 L62 92 L84 100 L82 105 Z" fill="#2a3f76"/>
<path d="M104 105 L112 92 L119 92 L127 105 Z" fill="#161c38"/>
<circle cx="94.500" cy="73" r="1.800" fill="#ddd8c8"/><circle cx="86.500" cy="90" r="1.800" fill="#ddd8c8"/><circle cx="68" cy="103" r="1.500" fill="#ddd8c8"/>
<path d="M36 48 Q50 50 58 53" stroke="#6275a8" stroke-width="1" fill="none"/>
<path d="M45 30 Q50 60 60 92" stroke="#243566" stroke-width="1.500" fill="none"/>
</g></g></svg></div>
<div id="tabbar">
<svg class="abs" style="left:0;top:0" width="400" height="60" viewBox="0 0 400 60" fill="none" stroke-linejoin="round" stroke-linecap="round">
<line x1="0" y1="0.500" x2="400" y2="0.500" stroke="#e2e2e2" stroke-width="1"/>
<g stroke="#ea5540" stroke-width="1.400"><path d="M25.600 24 L39.800 9.900 L54 24"/><path d="M29.400 20.500 V36 H49.600 V20.500"/><path d="M35.800 36 V26.300 H43.600 V36"/></g>
<g stroke="#c6c6c6" stroke-width="1.400"><path d="M118.300 22.300 H111.700 A6.100 6.100 0 1 1 118.300 15.700 Z"/><path d="M120.500 22.300 V15.700 A6.100 6.100 0 1 1 127.100 22.300 Z"/><path d="M118.300 24.500 V31.100 A6.100 6.100 0 1 1 111.700 24.500 Z"/><path d="M120.500 24.500 H127.100 A6.100 6.100 0 1 1 120.500 31.100 Z"/></g>
<g stroke="#9b9b9b" stroke-width="1.900"><path d="M192 12.500 H188 Q186 12.500 186 14.500 V33.500 Q186 35.500 188 35.500 H211.500 Q213.500 35.500 213.500 33.500 V14.500 Q213.500 12.500 211.500 12.500 H208"/><path d="M197 12.500 H203"/><path d="M194.500 10.300 V14.700 M205.500 10.300 V14.700"/><path d="M190.500 20.500 H209" stroke-dasharray="1.800 2" stroke-linecap="butt" stroke-width="1.300"/><path d="M190.500 25.300 H198.500 M190.500 29.700 H209"/></g>
<g stroke="#9b9b9b" stroke-width="1.900"><path d="M279.400 10 L292.300 16.300 L279.400 23 L266 16.300 Z"/><path d="M266 16.300 V30.800 L276.800 36 V22"/><path d="M281.700 24.300 V36.400 L292.700 30.600 Z"/></g>
<g stroke="#8a8a8a" stroke-width="1.500"><circle cx="359.800" cy="17" r="7.300"/><path d="M346.200 37 C347 30 352 26 359.800 26 C367.600 26 372.600 30 373.400 37"/></g>
</svg>

<div class="tl" style="left:0;color:#35dcec">首页</div>
<div class="tl" style="left:80px">咨询师</div>
<div class="tl" style="left:160px">心理书籍</div>
<div class="tl" style="left:240px">相关资源</div>
<div class="tl" style="left:320px">我的</div>
</div>
</div>


<div class="abs" style="left:867px;top:108px;width:1px;height:893px;background:#272727"></div>
<svg class="abs" style="left:619px;top:108px" width="249" height="38" viewBox="619 108 249 38" fill="none" stroke="#868686" stroke-width="1.500">
<g stroke="#fff" stroke-width="1.350" stroke-linejoin="round"><path d="M634.500 117.500 H642.500 L646.700 121.700 V132.500 H634.500 Z" /><path d="M642.300 117.700 V122 H646.500" stroke-width="1.200"/><path d="M634 122.500 H630 Q629.300 122.500 629.300 123.200 V136 Q629.300 136.700 630 136.700 H640.300 Q641 136.700 641 136 V133"/></g>
<circle cx="680.800" cy="124.300" r="6.600"/><path d="M676.300 129.500 L669.700 137"/>
<circle cx="714" cy="119.800" r="2.500"/><circle cx="714" cy="133.800" r="2.500"/><circle cx="723.300" cy="124.300" r="2.500"/><path d="M714 122.300 V131.300 M723.300 126.800 Q723 130 714.500 130.700"/>
<path d="M749.300 121.700 H756.500 V129 H764 V136.500 H749.300 Z M756.500 129 V136.500 M749.300 129 H756.500" stroke-width="1.400" stroke-linejoin="round"/><rect x="761" y="118.200" width="6.300" height="6.300" rx="0.800" stroke-width="1.400"/>
<rect x="791.300" y="120.100" width="13.500" height="13.900" rx="1.300" stroke-width="1.400"/><path d="M794.800 120.100 V121.500 Q794.800 124.500 798 124.500 H804.800 M791.300 128.600 H798.500 Q801.500 128.600 801.500 131.500 V134" stroke-width="1.400"/>
<g fill="#868686" stroke="none"><path d="M827.800 126.800 H843.500 C844.200 125.500 843.800 124 843.200 123.200 C844.600 123.500 845.600 124.600 845.800 125.600 C846.800 125.300 847.800 125.600 848.200 126 C847.600 127.200 846.400 127.500 845.300 127.500 C843.500 132.500 839 134.400 834.500 134.400 C830 134.400 827.600 131.500 827.800 126.800 Z"/><path d="M830 124.300 H832 V126.200 H830 Z M832.500 124.300 H834.500 V126.200 H832.500 Z M835 124.300 H837 V126.200 H835 Z M837.500 124.300 H839.500 V126.200 H837.500 Z M832.500 121.900 H834.500 V123.800 H832.500 Z M835 121.900 H837 V123.800 H835 Z M837.500 121.900 H839.500 V123.800 H837.500 Z M837.500 119.500 H839.500 V121.400 H837.500 Z"/></g>
</svg>
<div class="abs" style="left:643.500px;top:158.500px;font-size:12.900px;letter-spacing:0.700px;line-height:20px;color:#d6d6d6;white-space:nowrap">资源管理器</div>
<svg class="abs" style="left:826px;top:164px" width="18" height="6" viewBox="0 0 18 6" fill="#d0d0d0"><circle cx="2.500" cy="3" r="1.200"/><circle cx="8.800" cy="3" r="1.200"/><circle cx="15" cy="3" r="1.200"/></svg>
<div class="sec" style="top:189px"><i class="tri" style="left:10.500px;top:11px"></i><span style="position:absolute;left:25.500px;top:0.900px">打开的编辑器</span></div>
<div class="sec" style="top:216.500px"><i class="trid" style="left:9px;top:12px"></i><span style="position:absolute;left:25.500px;top:1px;font-size:14.600px;letter-spacing:-0.300px">MP-WEIXIN</span></div>
<div class="row" style="top:244.0px"><i class="tri" style="left:26px;top:9.500px;border-left-color:#c5c5c5"></i><svg class="abs" style="left:43.700px;top:7px" width="17.400" height="15" viewBox="0 0 19 15" preserveAspectRatio="none"><path d="M1.2 0.6 h5.600 l1.700 1.900 h8.200 q1.200 0 1.200 1.200 v8.600 q0 1.200 -1.200 1.200 h-15.500 q-1.200 0 -1.200 -1.200 v-10.500 q0 -1.200 1.200 -1.200z" fill="#90a4ae"/></svg><span>common</span></div>
<div class="row" style="top:271.5px"><i class="tri" style="left:26px;top:9.500px;border-left-color:#c5c5c5"></i><svg class="abs" style="left:43.700px;top:7px" width="17.400" height="15" viewBox="0 0 19 15" preserveAspectRatio="none"><path d="M1.2 0.6 h5.600 l1.700 1.900 h8.200 q1.200 0 1.200 1.200 v8.600 q0 1.200 -1.200 1.200 h-15.500 q-1.200 0 -1.200 -1.200 v-10.500 q0 -1.200 1.200 -1.200z" fill="#c6d934"/><g fill="#e9f2a8"><rect x="8.300" y="6.800" width="3.800" height="3.800"/><rect x="8.300" y="11.200" width="3.800" height="3.500"/><rect x="12.800" y="11.200" width="3.800" height="3.500"/><path d="M14.700 5.800 l2.700 2.700 l-2.700 2.700 l-2.700 -2.700z"/></g></svg><span>components</span></div>
<div class="row" style="top:299.0px"><i class="tri" style="left:26px;top:9.500px;border-left-color:#c5c5c5"></i><svg class="abs" style="left:43.700px;top:7px" width="17.400" height="15" viewBox="0 0 19 15" preserveAspectRatio="none"><path d="M1.2 0.6 h5.600 l1.700 1.900 h8.200 q1.200 0 1.200 1.200 v8.600 q0 1.200 -1.200 1.200 h-15.500 q-1.200 0 -1.200 -1.200 v-10.500 q0 -1.200 1.200 -1.200z" fill="#ff7043"/><path d="M8.300 5.800 H17.800 L16.900 14 L13 15.200 L9.200 14 Z" fill="#ffb8a4"/><path d="M11.600 8.600 L10.200 10.100 L11.600 11.600 M14.500 8.600 L15.900 10.100 L14.500 11.600" stroke="#ff5a2e" stroke-width="1" fill="none"/></svg><span>pages</span></div>
<div class="row" style="top:326.5px"><i class="tri" style="left:26px;top:9.500px;border-left-color:#c5c5c5"></i><svg class="abs" style="left:43.700px;top:7px" width="17.400" height="15" viewBox="0 0 19 15" preserveAspectRatio="none"><path d="M1.2 0.6 h5.600 l1.700 1.900 h8.200 q1.200 0 1.200 1.200 v8.600 q0 1.200 -1.200 1.200 h-15.500 q-1.200 0 -1.200 -1.200 v-10.500 q0 -1.200 1.200 -1.200z" fill="#fbc02d"/><rect x="9" y="6.500" width="8.600" height="8.500" rx="1" fill="#fdeaa6"/><path d="M10.800 9 H15.800 M10.800 10.800 H15.800 M10.800 12.600 H14" stroke="#f4b400" stroke-width="0.900"/></svg><span>static</span></div>
<div class="row" style="top:354.0px"><svg class="abs" style="left:44px;top:6px" width="16" height="16" viewBox="0 0 16 16"><rect x="0" y="0" width="16" height="16" fill="#ffca28"/><text x="4.600" y="13.800" font-family="'Liberation Sans',sans-serif" font-weight="bold" font-size="8.500" fill="#3a2f00" letter-spacing="-0.300">JS</text></svg><span>app.js</span></div>
<div class="row" style="top:381.5px"><svg class="abs" style="left:42px;top:6px" width="20" height="16" viewBox="0 0 20 16" fill="none" stroke="#fbc02d" stroke-width="1.500"><path d="M6 1.200 Q3.300 1 3.300 3.200 V5.800 Q3.300 7.600 0.800 7.900 Q3.300 8.200 3.300 10 V12.600 Q3.300 14.800 6 14.600"/><path d="M14 1.200 Q16.700 1 16.700 3.200 V5.800 Q16.700 7.600 19.200 7.900 Q16.700 8.200 16.700 10 V12.600 Q16.700 14.800 14 14.600"/><path d="M6.600 10.800 h1.300 M9.350 10.800 h1.300 M12.100 10.800 h1.300" stroke-width="1.400"/></svg><span>app.json</span></div>
<div class="row" style="top:409.0px"><svg class="abs" style="left:44px;top:6.500px" width="17" height="16" viewBox="0 0 17 16" fill="#42a5f5"><path d="M2.200 0 H16.600 L14.500 13 L7.800 15.500 L0.300 13 L0.800 9.600 H3.600 L3.400 11 L8 12.500 L12 11 L12.500 8 H1 L1.500 5 H13 L13.300 3 H1.700 Z"/></svg><span>app.wxss</span></div>
<div class="row" style="top:436.5px"><svg class="abs" style="left:42px;top:6px" width="20" height="16" viewBox="0 0 20 16" fill="none" stroke="#fbc02d" stroke-width="1.500"><path d="M6 1.200 Q3.300 1 3.300 3.200 V5.800 Q3.300 7.600 0.800 7.900 Q3.300 8.200 3.300 10 V12.600 Q3.300 14.800 6 14.600"/><path d="M14 1.200 Q16.700 1 16.700 3.200 V5.800 Q16.700 7.600 19.200 7.900 Q16.700 8.200 16.700 10 V12.600 Q16.700 14.800 14 14.600"/><path d="M6.600 10.800 h1.300 M9.350 10.800 h1.300 M12.100 10.800 h1.300" stroke-width="1.400"/></svg><span>project.config.json</span></div>
<div class="row" style="top:464.0px"><svg class="abs" style="left:42px;top:6px" width="20" height="16" viewBox="0 0 20 16" fill="none" stroke="#fbc02d" stroke-width="1.500"><path d="M6 1.200 Q3.300 1 3.300 3.200 V5.800 Q3.300 7.600 0.800 7.900 Q3.300 8.200 3.300 10 V12.600 Q3.300 14.800 6 14.600"/><path d="M14 1.200 Q16.700 1 16.700 3.200 V5.800 Q16.700 7.600 19.200 7.900 Q16.700 8.200 16.700 10 V12.600 Q16.700 14.800 14 14.600"/><path d="M6.600 10.800 h1.300 M9.350 10.800 h1.300 M12.100 10.800 h1.300" stroke-width="1.400"/></svg><span>sitemap.json</span></div>
<div class="sec" style="top:981px"><i class="tri" style="left:10.500px;top:9.500px"></i><span style="position:absolute;left:25.500px;top:2px">大纲</span></div>


<div class="abs" style="left:868px;top:617px;width:664px;height:36px;background:#333"></div>
<div class="ptab" style="left:893px;color:#f0f0f0;font-weight:500">调试器</div>
<div class="abs" style="left:893px;top:651px;width:42px;height:1px;background:#e7e7e7"></div>
<div class="ptab" style="left:959.500px">问题</div>
<div class="ptab" style="left:1011.800px">输出</div>
<div class="ptab" style="left:1064px">终端</div>
<svg class="abs" style="left:1470px;top:625px" width="62" height="24" viewBox="1470 625 62 24" fill="none" stroke="#d0d0d0" stroke-width="1.500"><path d="M1477.300 641 L1483.300 634.700 L1489.300 641"/><path d="M1518 632.500 L1528.500 643 M1528.500 632.500 L1518 643"/></svg>
<div class="abs" style="left:868px;top:653px;width:664px;height:34px;background:#292a2d;border-bottom:1px solid #3d3e41"></div>
<div class="abs" style="left:868px;top:687px;width:664px;height:34px;background:#292a2d;border-bottom:1px solid #494a4d"></div>
<svg class="abs" style="left:876px;top:656px" width="40" height="28" viewBox="876 656 40 28" fill="none" stroke="#9aa0a6" stroke-width="1.500"><path d="M896 667 V663.500 Q896 662.200 894.700 662.200 H883 Q881.700 662.200 881.700 663.500 V673.700 Q881.700 675 883 675 H887"/><path d="M888.500 667.500 L897 671 L893.600 672.600 L896.600 676.500 L894.800 677.800 L892 674 L889.800 676.500 Z" fill="#9aa0a6" stroke="none"/><line x1="911.500" y1="659.500" x2="911.500" y2="679" stroke="#45464a" stroke-width="1"/></svg>
<div class="dtab" style="left:934px">Wxml</div>
<div class="abs" style="left:987px;top:653px;width:82px;height:33px;background:#000"></div>
<div class="dtab" style="left:1001px">Console</div>
<div class="dtab" style="left:1083.500px;letter-spacing:-0.200px">Sources</div>
<div class="dtab" style="left:1165.300px;letter-spacing:-0.100px">Network</div>
<div class="dtab" style="left:1251px">Memory</div>
<svg class="abs" style="left:1330px;top:660px" width="202" height="22" viewBox="1330 660 202 22" fill="none" stroke="#c5c8cc" stroke-width="1.500"><path d="M1333.500 665 L1337.700 669.200 L1333.500 673.400 M1339.300 665 L1343.500 669.200 L1339.300 673.400"/><line x1="1442.500" y1="659.500" x2="1442.500" y2="679" stroke="#45464a" stroke-width="1"/>
<g fill="#9aa0a6" stroke="none"><path id="gearp" transform="translate(1465.200 669.600) scale(0.940) translate(-1466.700 -669.600)" d="M1474.300 670.500 c0.040 -0.300 0.060 -0.600 0.060 -0.900 s-0.020 -0.600 -0.070 -0.900 l2 -1.500 c0.180 -0.140 0.230 -0.400 0.120 -0.600 l-1.900 -3.200 c-0.120 -0.200 -0.360 -0.280 -0.570 -0.200 l-2.300 0.940 c-0.500 -0.370 -1 -0.680 -1.600 -0.900 l-0.350 -2.480 c-0.030 -0.230 -0.220 -0.400 -0.460 -0.400 h-3.740 c-0.230 0 -0.420 0.170 -0.450 0.400 l-0.350 2.480 c-0.570 0.230 -1.100 0.550 -1.580 0.900 l-2.330 -0.940 c-0.200 -0.080 -0.450 0 -0.570 0.200 l-1.870 3.200 c-0.120 0.200 -0.070 0.460 0.110 0.600 l1.970 1.500 c-0.040 0.300 -0.080 0.620 -0.080 0.920 s0.020 0.600 0.070 0.900 l-1.970 1.500 c-0.180 0.140 -0.230 0.400 -0.120 0.600 l1.870 3.200 c0.120 0.200 0.360 0.280 0.570 0.200 l2.330 -0.940 c0.480 0.370 1 0.680 1.580 0.900 l0.350 2.480 c0.040 0.230 0.230 0.400 0.460 0.400 h3.740 c0.230 0 0.430 -0.170 0.460 -0.400 l0.350 -2.480 c0.570 -0.230 1.100 -0.550 1.580 -0.900 l2.330 0.940 c0.200 0.080 0.450 0 0.570 -0.200 l1.870 -3.200 c0.120 -0.200 0.070 -0.460 -0.110 -0.600 z m-8.900 2.600 c-1.900 0 -3.500 -1.600 -3.500 -3.500 s1.600 -3.500 3.500 -3.500 s3.500 1.600 3.500 3.500 s-1.600 3.500 -3.500 3.500 z"/>
<circle cx="1501" cy="663" r="1.800"/><circle cx="1501" cy="669.600" r="1.800"/><circle cx="1501" cy="676.200" r="1.800"/>
<path d="M1525.400 660 h2.800 v15 h4 v3.800 h-6.800 z" fill="#8f9297"/><rect x="1529" y="660" width="3" height="14.200" fill="#75787d"/></g></svg>
<svg class="abs" style="left:876px;top:689px" width="70" height="30" viewBox="876 689 70 30" fill="none" stroke="#9aa0a6" stroke-width="1.500"><rect x="878.700" y="696" width="17.500" height="15.300"/><line x1="883.500" y1="696" x2="883.500" y2="711.300"/><path d="M887 699.500 L893.500 703.700 L887 707.900 Z" fill="#9aa0a6" stroke="none"/>
<rect x="908" y="689" width="29.500" height="28" rx="3" fill="#3c3d40" stroke="none"/><circle cx="924" cy="703.700" r="7.100" stroke-width="2.300"/><line x1="919" y1="698.600" x2="929" y2="708.800" stroke-width="2.300"/>
<line x1="946.300" y1="693.500" x2="946.300" y2="713" stroke="#45464a" stroke-width="1"/></svg>
<div class="ctx" style="left:958px">appservice</div>
<svg class="abs" style="left:1105px;top:689px" width="80" height="30" viewBox="1105 689 80 30" fill="#9aa0a6"><path d="M1108.700 699.500 h9 l-4.500 7.500z"/><rect x="1129" y="693.500" width="1" height="19.500" fill="#45464a"/><rect x="1176" y="693.500" width="1" height="19.500" fill="#45464a"/><path d="M1153 697 C1148 697 1144.300 700.200 1142.800 703.600 C1144.300 707 1148 710.200 1153 710.200 C1158 710.200 1161.700 707 1163.200 703.600 C1161.700 700.200 1158 697 1153 697 Z M1153 708 A4.400 4.400 0 1 1 1153 699.200 A4.400 4.400 0 1 1 1153 708 Z M1153 701 A2.600 2.600 0 1 0 1153 706.200 A2.600 2.600 0 1 0 1153 701 Z" fill-rule="evenodd"/></svg>
<div class="abs" style="left:1185px;top:690px;width:160px;height:26px;background:#242424;border:1px solid #5a5b5e"></div>
<div class="ctx" style="left:1190.500px;color:#d0d2d6">Filter</div>
<div class="ctx" style="left:1355.500px">Default levels</div>
<svg class="abs" style="left:1448px;top:689px" width="84" height="30" viewBox="1448 689 84 30" fill="#9aa0a6"><path d="M1450 698.500 h9 l-4.500 7.500z"/><rect x="1512" y="693.500" width="1" height="19.500" fill="#45464a"/><path transform="translate(1536.300 703.300) scale(0.940) translate(-1466.700 -669.600)" d="M1474.300 670.500 c0.040 -0.300 0.060 -0.600 0.060 -0.900 s-0.020 -0.600 -0.070 -0.900 l2 -1.500 c0.180 -0.140 0.230 -0.400 0.120 -0.600 l-1.900 -3.200 c-0.120 -0.200 -0.360 -0.280 -0.570 -0.200 l-2.300 0.940 c-0.500 -0.370 -1 -0.680 -1.600 -0.900 l-0.350 -2.480 c-0.030 -0.230 -0.220 -0.400 -0.460 -0.400 h-3.740 c-0.230 0 -0.420 0.170 -0.450 0.400 l-0.350 2.480 c-0.570 0.230 -1.100 0.550 -1.580 0.900 l-2.330 -0.940 c-0.200 -0.080 -0.450 0 -0.570 0.200 l-1.870 3.200 c-0.120 0.200 -0.070 0.460 0.110 0.600 l1.970 1.500 c-0.040 0.300 -0.080 0.620 -0.080 0.920 s0.020 0.600 0.070 0.900 l-1.970 1.500 c-0.180 0.140 -0.230 0.400 -0.120 0.600 l1.870 3.200 c0.120 0.200 0.360 0.280 0.570 0.200 l2.330 -0.940 c0.480 0.370 1 0.680 1.580 0.900 l0.350 2.480 c0.040 0.230 0.230 0.400 0.460 0.400 h3.740 c0.230 0 0.430 -0.170 0.460 -0.400 l0.350 -2.480 c0.570 -0.230 1.100 -0.550 1.580 -0.900 l2.330 0.940 c0.200 0.080 0.450 0 0.570 -0.200 l1.870 -3.200 c0.120 -0.200 0.070 -0.460 -0.110 -0.600 z m-8.900 2.600 c-1.900 0 -3.500 -1.600 -3.500 -3.500 s1.600 -3.500 3.500 -3.500 s3.500 1.600 3.500 3.500 s-1.600 3.500 -3.500 3.500 z"/></svg>
<svg class="abs" style="left:876px;top:726px" width="12" height="14" viewBox="0 0 12 14" fill="none" stroke="#367cf1" stroke-width="1.700"><path d="M3.500 2.500 L8 7 L3.500 11.500"/></svg>
<div class="abs" style="left:868px;top:967px;width:664px;height:34px;background:#292a2d;border-top:1px solid #565656"></div>
<svg class="abs" style="left:884px;top:972px" width="10" height="26" viewBox="0 0 10 26" fill="#9aa0a6"><circle cx="5" cy="6.500" r="1.700"/><circle cx="5" cy="13" r="1.700"/><circle cx="5" cy="19.500" r="1.700"/></svg>
<div class="abs" style="left:903px;top:968px;width:78px;height:33px;background:#000"></div>
<div class="dtab" style="left:914.500px;top:968px;height:33px;line-height:34px">Console</div>
<svg class="abs" style="left:1522px;top:978px" width="10" height="14" viewBox="0 0 10 14" stroke="#9aa0a6" stroke-width="1.500"><path d="M7 1 L19 13 M19 1 L7 13" stroke-width="2"/></svg>

</body>
</html>
